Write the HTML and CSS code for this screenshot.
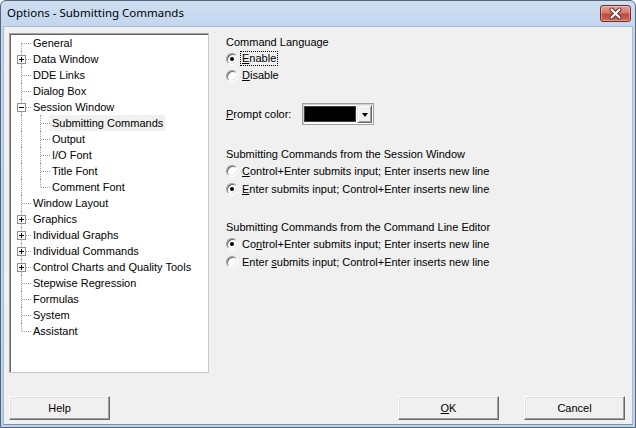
FILE: index.html
```html
<!DOCTYPE html>
<html>
<head>
<meta charset="utf-8">
<title>Options - Submitting Commands</title>
<link rel="stylesheet" href="styles.css">
</head>
<body>
<div class="window">
  <div class="titlebar">
    <span class="title">Options - Submitting Commands</span>
    <div class="close">
      <svg width="29" height="15" viewBox="0 0 29 15">
        <path d="M10.5 3.5 L18.5 11.5 M18.5 3.5 L10.5 11.5" stroke="#5a2a26" stroke-width="4" stroke-linecap="round" fill="none"/>
        <path d="M10.5 3.5 L18.5 11.5 M18.5 3.5 L10.5 11.5" stroke="#ffffff" stroke-width="2.2" stroke-linecap="round" fill="none"/>
      </svg>
    </div>
  </div>
  <div class="client">
    <div class="content">
      <div class="tree">
        <div class="row"><span class="c first"></span><span class="lbl">General</span></div>
        <div class="row"><span class="c tee"><span class="exp plus"></span></span><span class="lbl">Data Window</span></div>
        <div class="row"><span class="c tee"></span><span class="lbl">DDE Links</span></div>
        <div class="row"><span class="c tee"></span><span class="lbl">Dialog Box</span></div>
        <div class="row"><span class="c tee"><span class="exp"></span></span><span class="lbl">Session Window</span></div>
        <div class="row"><span class="c pipe"></span><span class="c tee"></span><span class="lbl sel">Submitting Commands</span></div>
        <div class="row"><span class="c pipe"></span><span class="c tee"></span><span class="lbl">Output</span></div>
        <div class="row"><span class="c pipe"></span><span class="c tee"></span><span class="lbl">I/O Font</span></div>
        <div class="row"><span class="c pipe"></span><span class="c tee"></span><span class="lbl">Title Font</span></div>
        <div class="row"><span class="c pipe"></span><span class="c ell"></span><span class="lbl">Comment Font</span></div>
        <div class="row"><span class="c tee"></span><span class="lbl">Window Layout</span></div>
        <div class="row"><span class="c tee"><span class="exp plus"></span></span><span class="lbl">Graphics</span></div>
        <div class="row"><span class="c tee"><span class="exp plus"></span></span><span class="lbl">Individual Graphs</span></div>
        <div class="row"><span class="c tee"><span class="exp plus"></span></span><span class="lbl">Individual Commands</span></div>
        <div class="row"><span class="c tee"><span class="exp plus"></span></span><span class="lbl">Control Charts and Quality Tools</span></div>
        <div class="row"><span class="c tee"></span><span class="lbl">Stepwise Regression</span></div>
        <div class="row"><span class="c tee"></span><span class="lbl">Formulas</span></div>
        <div class="row"><span class="c tee"></span><span class="lbl">System</span></div>
        <div class="row"><span class="c ell"></span><span class="lbl">Assistant</span></div>
      </div>
      <div class="panel">
        <div class="hdr">Command Language</div>
        <div class="radio r1"><span class="rb on"></span><span class="rl focus"><u>E</u>nable</span></div>
        <div class="radio r1"><span class="rb"></span><span class="rl"><u>D</u>isable</span></div>

        <div class="prompt">
          <span class="plabel"><u>P</u>rompt color:</span>
          <div class="combo">
            <span class="swatch"></span>
            <span class="dropbtn"><span class="arrow"></span></span>
          </div>
        </div>

        <div class="hdr sec">Submitting Commands from the Session Window</div>
        <div class="radio"><span class="rb"></span><span class="rl"><u>C</u>ontrol+Enter submits input; Enter inserts new line</span></div>
        <div class="radio"><span class="rb on"></span><span class="rl"><u>E</u>nter submits input; Control+Enter inserts new line</span></div>

        <div class="hdr sec">Submitting Commands from the Command Line Editor</div>
        <div class="radio"><span class="rb on"></span><span class="rl">Co<u>n</u>trol+Enter submits input; Enter inserts new line</span></div>
        <div class="radio"><span class="rb"></span><span class="rl">Enter <u>s</u>ubmits input; Control+Enter inserts new line</span></div>
      </div>
    </div>
    <div class="buttons">
      <button class="btn">Help</button>
      <span class="spacer"></span>
      <button class="btn"><u>O</u>K</button>
      <button class="btn cancel">Cancel</button>
    </div>
  </div>
</div>
</body>
</html>
```
FILE: styles.css
```css
html, body {
  margin: 0;
  padding: 0;
  background: #ffffff;
}

.window {
  width: 636px;
  height: 428px;
  box-sizing: border-box;
  border: 1px solid #55667c;
  border-radius: 6px 6px 0 0;
  background: linear-gradient(#cfdff2 0px, #c2d6ee 26px, #bcd2ec 100%);
  padding: 0 2px 2px 2px;
  display: flex;
  flex-direction: column;
  font-family: "Liberation Sans", Arial, sans-serif;
  font-size: 11px;
  color: #000;
}

.titlebar {
  height: 25px;
  flex: none;
  display: flex;
  align-items: flex-start;
  justify-content: space-between;
}

.title {
  font-family: "Noto Sans", "Liberation Sans", sans-serif;
  font-size: 11.5px;
  line-height: 16px;
  margin: 4px 0 0 4px;
  color: #000;
}

.close {
  width: 29px;
  height: 15px;
  margin: 4px 2px 0 0;
  border: 1px solid #6e2f2a;
  border-radius: 3px;
  background: linear-gradient(#e3a195 0%, #d2786a 45%, #c2473a 55%, #cf6a55 100%);
  box-shadow: inset 0 0 0 1px rgba(255, 255, 255, 0.35);
}

.close svg {
  display: block;
}

.client {
  flex: 1;
  background: #f0f0f0;
  border: 1px solid #a9bcd3;
  border-bottom-color: #7e90a8;
  display: flex;
  flex-direction: column;
}

.content {
  display: flex;
  padding: 6px 0 0 5px;
}

/* tree */
.tree {
  width: 200px;
  height: 340px;
  box-sizing: border-box;
  flex: none;
  border: 1px solid #a0a0a0;
  border-right-color: #c8c8c8;
  border-bottom-color: #c8c8c8;
  box-shadow: inset 1px 1px 0 #696969;
  background: #fff;
  padding: 1px 0 0 2px;
}

.row {
  display: flex;
  height: 16px;
  align-items: center;
}

.c {
  position: relative;
  width: 19px;
  height: 16px;
  flex: none;
}

.c::before {
  content: "";
  position: absolute;
  left: 9px;
  top: 0;
  bottom: 0;
  border-left: 1px dotted #a0a0a0;
}

.c.first::before {
  top: 8px;
}

.c.ell::before {
  bottom: 8px;
}

.c.tee::after,
.c.first::after,
.c.ell::after {
  content: "";
  position: absolute;
  left: 10px;
  right: 0;
  top: 8px;
  border-top: 1px dotted #a0a0a0;
}

.exp {
  position: absolute;
  left: 5px;
  top: 4px;
  width: 7px;
  height: 7px;
  border: 1px solid #919191;
  background: #fff;
  z-index: 1;
}

.exp::before {
  content: "";
  position: absolute;
  left: 1px;
  top: 3px;
  width: 5px;
  height: 1px;
  background: #000;
}

.exp.plus::after {
  content: "";
  position: absolute;
  left: 3px;
  top: 1px;
  width: 1px;
  height: 5px;
  background: #000;
}

.lbl {
  padding: 0 2px;
  line-height: 16px;
  white-space: nowrap;
}

.lbl.sel {
  background: #f0f0f0;
}

/* right panel */
.panel {
  margin-left: 16px;
  padding-top: 1px;
  display: flex;
  flex-direction: column;
}

.hdr {
  height: 16px;
  line-height: 16px;
  margin-left: 1px;
}

.hdr.sec {
  margin-top: 21px;
}

.radio {
  display: flex;
  align-items: center;
  height: 18px;
}

.radio.r1 {
  height: 17px;
}

.rb {
  position: relative;
  width: 10px;
  height: 10px;
  flex: none;
  margin-left: 1px;
  border-radius: 50%;
  border: 1px solid;
  border-color: #a0a0a0 #ffffff #ffffff #a0a0a0;
  box-shadow: inset 1px 1px 0 #696969, inset -1px -1px 0 #e3e3e3;
  background: #fff;
}

.rb.on::after {
  content: "";
  position: absolute;
  left: 3px;
  top: 3px;
  width: 4px;
  height: 4px;
  border-radius: 50%;
  background: #000;
}

.rl {
  margin-left: 3px;
  padding: 0 1px;
  line-height: 13px;
  white-space: nowrap;
}

.rl.focus {
  outline: 1px dotted #000;
}

.prompt {
  display: flex;
  align-items: center;
  margin-top: 19px;
  height: 22px;
}

.plabel {
  width: 76px;
  margin-left: 1px;
  flex: none;
}

.combo {
  width: 72px;
  height: 22px;
  box-sizing: border-box;
  border: 1px solid #a0a0a0;
  box-shadow: inset 1px 1px 0 #d0d0d0;
  background: #fff;
  padding: 1px;
  display: flex;
  align-items: stretch;
}

.swatch {
  width: 50px;
  margin: 2px 2px 2px 1px;
  background: #000;
  box-shadow: 0 0 0 1px #3c3c3c;
}

.dropbtn {
  width: 15px;
  box-sizing: border-box;
  background: #f0f0f0;
  border: 1px solid;
  border-color: #e3e3e3 #696969 #696969 #e3e3e3;
  box-shadow: inset 1px 1px 0 #fff, inset -1px -1px 0 #a0a0a0;
  display: flex;
  align-items: center;
  justify-content: center;
}

.arrow {
  width: 0;
  height: 0;
  border-left: 3.5px solid transparent;
  border-right: 3.5px solid transparent;
  border-top: 4px solid #000;
  margin-top: 1px;
}

/* buttons */
.buttons {
  margin-top: auto;
  display: flex;
  padding: 0 7px 4px 5px;
}

.spacer {
  flex: 1;
}

.btn {
  width: 101px;
  height: 24px;
  box-sizing: border-box;
  padding: 0;
  margin: 0;
  font-family: "Liberation Sans", Arial, sans-serif;
  font-size: 11px;
  color: #000;
  background: #f0f0f0;
  border: 1px solid;
  border-color: #ffffff #696969 #696969 #ffffff;
  box-shadow: inset -1px -1px 0 #a0a0a0, inset 1px 1px 0 #e3e3e3;
  border-radius: 0;
}

.btn.cancel {
  margin-left: 25px;
}
```
